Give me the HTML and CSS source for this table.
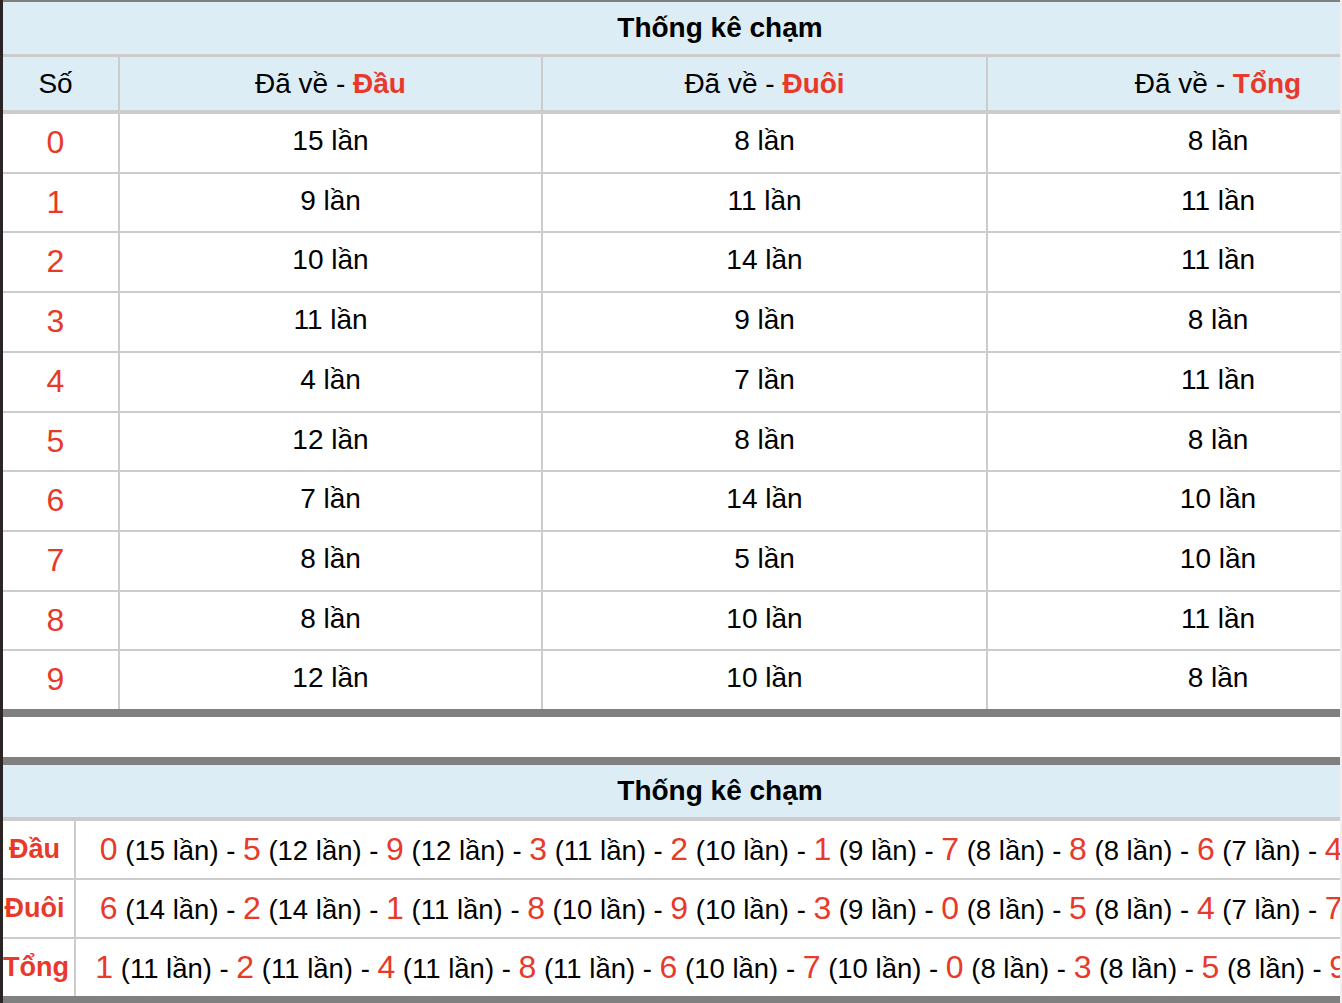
FILE: index.html
```html
<!DOCTYPE html>
<html lang="vi">
<head>
<meta charset="utf-8">
<title>Thống kê chạm</title>
<link rel="stylesheet" href="styles.css">
</head>
<body>
<div class="page">
  <table class="stats">
    <colgroup>
      <col class="w1"><col class="w2"><col class="w3"><col class="w4">
    </colgroup>
    <tr><th class="title" colspan="4">Thống kê chạm</th></tr>
    <tr class="head">
      <th class="c1">Số</th>
      <th>Đã về - <b class="red">Đầu</b></th>
      <th>Đã về - <b class="red">Đuôi</b></th>
      <th>Đã về - <b class="red">Tổng</b></th>
    </tr>
    <tr><td class="num">0</td><td>15 lần</td><td>8 lần</td><td>8 lần</td></tr>
    <tr><td class="num">1</td><td>9 lần</td><td>11 lần</td><td>11 lần</td></tr>
    <tr><td class="num">2</td><td>10 lần</td><td>14 lần</td><td>11 lần</td></tr>
    <tr><td class="num">3</td><td>11 lần</td><td>9 lần</td><td>8 lần</td></tr>
    <tr><td class="num">4</td><td>4 lần</td><td>7 lần</td><td>11 lần</td></tr>
    <tr><td class="num">5</td><td>12 lần</td><td>8 lần</td><td>8 lần</td></tr>
    <tr><td class="num">6</td><td>7 lần</td><td>14 lần</td><td>10 lần</td></tr>
    <tr><td class="num">7</td><td>8 lần</td><td>5 lần</td><td>10 lần</td></tr>
    <tr><td class="num">8</td><td>8 lần</td><td>10 lần</td><td>11 lần</td></tr>
    <tr class="last"><td class="num">9</td><td>12 lần</td><td>10 lần</td><td>8 lần</td></tr>
  </table>

  <div class="gap"></div>

  <table class="summary">
    <colgroup>
      <col class="s1"><col class="s2">
    </colgroup>
    <tr><th class="title" colspan="2">Thống kê chạm</th></tr>
    <tr>
      <td class="label">Đầu</td>
      <td class="list"><span class="d">0</span> (15 lần) - <span class="d">5</span> (12 lần) - <span class="d">9</span> (12 lần) - <span class="d">3</span> (11 lần) - <span class="d">2</span> (10 lần) - <span class="d">1</span> (9 lần) - <span class="d">7</span> (8 lần) - <span class="d">8</span> (8 lần) - <span class="d">6</span> (7 lần) - <span class="d">4</span> (4 lần)</td>
    </tr>
    <tr>
      <td class="label">Đuôi</td>
      <td class="list"><span class="d">6</span> (14 lần) - <span class="d">2</span> (14 lần) - <span class="d">1</span> (11 lần) - <span class="d">8</span> (10 lần) - <span class="d">9</span> (10 lần) - <span class="d">3</span> (9 lần) - <span class="d">0</span> (8 lần) - <span class="d">5</span> (8 lần) - <span class="d">4</span> (7 lần) - <span class="d">7</span> (5 lần)</td>
    </tr>
    <tr class="last">
      <td class="label">Tổng</td>
      <td class="list"><span class="d">1</span> (11 lần) - <span class="d">2</span> (11 lần) - <span class="d">4</span> (11 lần) - <span class="d">8</span> (11 lần) - <span class="d">6</span> (10 lần) - <span class="d">7</span> (10 lần) - <span class="d">0</span> (8 lần) - <span class="d">3</span> (8 lần) - <span class="d">5</span> (8 lần) - <span class="d">9</span> (8 lần)</td>
    </tr>
  </table>
</div>
</body>
</html>
```

FILE: styles.css
```css
html, body {
  margin: 0;
  padding: 0;
  background: #efefef;
}

body {
  font-family: "Liberation Sans", Arial, Helvetica, sans-serif;
  color: #000;
}

.page {
  width: 1337px;
  height: 1003px;
  overflow: hidden;
  background: #fff;
  border-left: 3px solid #2a2424;
}

table {
  border-collapse: separate;
  border-spacing: 0;
  table-layout: fixed;
}

th, td {
  padding: 0;
  text-align: center;
  white-space: nowrap;
  overflow: hidden;
}

.red { color: #e8392b; font-weight: bold; }

/* top table */
.stats {
  width: 1445px;
  border-top: 2px solid #808080;
  border-bottom: 8px solid #808080;
}

.stats .w1 { width: 117px; }
.stats .w2 { width: 423px; }
.stats .w3 { width: 445px; }
.stats .w4 { width: 460px; }

.title {
  background: #ddedf5;
  font-size: 28px;
  font-weight: bold;
  height: 52px;
  line-height: 52px;
  padding-right: 11px;
  border-bottom: 3px solid #cccccc;
}

.stats .head th {
  background: #ddedf5;
  font-size: 28px;
  font-weight: normal;
  height: 53px;
  line-height: 53px;
  border-bottom: 4px solid #cccccc;
  border-right: 2px solid #cccccc;
}

.stats .head th:last-child { border-right: none; }

.stats .head th.c1 { padding-right: 10px; }

.stats td {
  font-size: 28px;
  line-height: 53.7px;
  padding-bottom: 4px;
  border-bottom: 2px solid #cccccc;
  border-right: 2px solid #cccccc;
}

.stats td:last-child { border-right: none; }
.stats tr.last td { border-bottom: none; }

.stats td.num {
  color: #e8392b;
  font-size: 32px;
  line-height: 57.7px;
  padding-bottom: 0;
  padding-right: 10px;
}

.gap { height: 40px; }

/* bottom table */
.summary {
  width: 1449px;
  border-top: 8px solid #808080;
  border-bottom: 8px solid #808080;
}

.summary .s1 { width: 73px; }
.summary .s2 { width: 1376px; }

.summary .title {
  border-bottom: 4px solid #cccccc;
  padding-right: 15px;
}

.summary td {
  height: 57px;
  border-bottom: 2px solid #cccccc;
  font-size: 27.5px;
}

.summary tr.last td { border-bottom: none; }

.summary td.label {
  padding-right: 8px;
  color: #e8392b;
  font-weight: bold;
  font-size: 27px;
  border-right: 2px solid #cccccc;
  overflow: visible;
}

.summary .d {
  color: #e8392b;
  font-size: 32px;
}
```
